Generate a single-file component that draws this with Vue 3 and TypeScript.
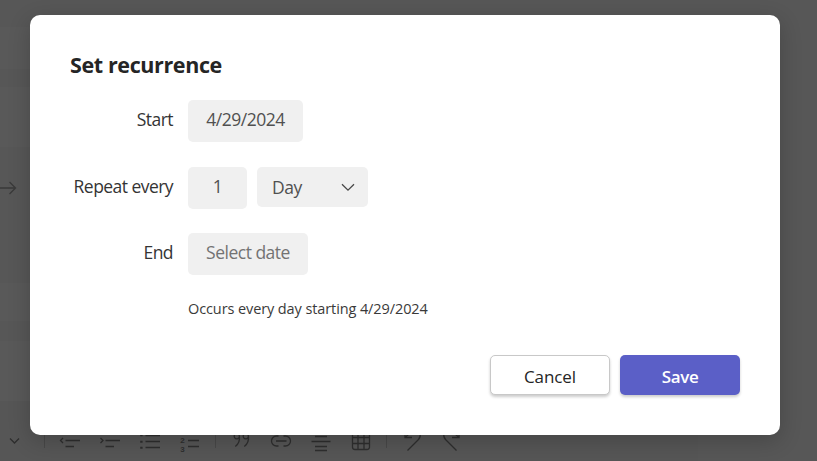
<script setup lang="ts">
import { computed, ref } from 'vue'

const startDate = ref('4/29/2024')
const interval = ref(1)
const unit = ref('Day')
const summary = computed(() => `Occurs every ${unit.value.toLowerCase()} starting ${startDate.value}`)

interface Tool { name: string; d?: string; kind: 'icon' | 'numbers' | 'sep' }
const tools: Tool[] = [
  { name: 'outdent', kind: 'icon', d: 'M13 18l-2.5 2.5 2.5 2.5M15.5 20.5H30M15.5 26.5H24' },
  { name: 'indent', kind: 'icon', d: 'M10.5 18l2.5 2.5-2.5 2.5M15.5 20.5H30M15.5 26.5H24' },
  { name: 'bullets', kind: 'icon', d: 'M15.5 15.5H30M15.5 21.5H30M15.5 27.5H30M10.2 15.5h2.4M10.2 21.5h2.4M10.2 27.5h2.4M10.2 14.8h2.4M10.2 22.2h2.4M10.2 28.2h2.4' },
  { name: 'numbers', kind: 'numbers', d: 'M18 20.5H29M18 26.5H29' },
  { name: 'divider-1', kind: 'sep' },
  { name: 'quote', kind: 'icon', d: 'M18.3 15.5a2.6 2.6 0 1 1-5 0 2.6 2.6 0 0 1 5 0c.6 4-.6 8.5-4 11M27.3 15.5a2.6 2.6 0 1 1-5 0 2.6 2.6 0 0 1 5 0c.6 4-.6 8.5-4 11' },
  { name: 'link', kind: 'icon', d: 'M17.5 16h-2a5 5 0 0 0 0 10h2M22.5 16h2a5 5 0 0 1 0 10h-2M15 21h10.5' },
  { name: 'align', kind: 'icon', d: 'M14 16.5h12M10.5 21.5h19M14 26.5h12M14 30.5h12' },
  { name: 'table', kind: 'icon', d: 'M11.5 12h17v15a2.5 2.5 0 0 1-2.5 2.5H14a2.5 2.5 0 0 1-2.5-2.5zM17 12v17.5M23 12v17.5M11.5 17.5h17M11.5 23.5h17' },
  { name: 'divider-2', kind: 'sep' },
  { name: 'undo', kind: 'icon', d: 'M13 10v7.5h7M13 17.5l5-4.5M22 10c6 0 8 5.5 4.5 9.5L15.5 30.5' },
  { name: 'redo', kind: 'icon', d: 'M27 10v7.5h-7M27 17.5l-5-4.5M18 10c-6 0-8 5.5-4.5 9.5L24.5 30.5' },
]
</script>

<template>
  <div class="page">
    <main class="backdrop">
      <div class="band band-a"></div>
      <div class="band band-b"></div>
      <div class="arrow-row">
        <svg class="arrow" width="17" height="16" viewBox="0 0 17 16"><path d="M0 8H15M9.5 2l6 6-6 6" /></svg>
      </div>
      <div class="band band-c"></div>
      <div class="band band-d"></div>
      <div class="toolbar">
        <svg width="28" height="42" viewBox="0 0 28 42"><path d="M10 18.5l4.5 4.5 4.5-4.5" /></svg>
        <span class="sep lead"></span>
        <template v-for="t in tools" :key="t.name">
          <span v-if="t.kind === 'sep'" class="sep"></span>
          <svg v-else width="40" height="42" viewBox="0 0 40 42">
            <path :d="t.d" />
            <template v-if="t.kind === 'numbers'">
              <text x="10.3" y="22.5">2</text>
              <text x="10.3" y="31.8">3</text>
            </template>
          </svg>
        </template>
      </div>
    </main>

    <div class="overlay">
      <section class="dialog" role="dialog" aria-labelledby="title">
        <h1 id="title">Set recurrence</h1>
        <div class="form">
          <span class="label">Start</span>
          <div class="field date">{{ startDate }}</div>
          <span class="label l-repeat">Repeat every</span>
          <div class="pair">
            <div class="field count">{{ interval }}</div>
            <div class="field select">
              <span>{{ unit }}</span>
              <svg width="14" height="9" viewBox="0 0 14 9"><path d="M1 1.2l6 6 6-6" /></svg>
            </div>
          </div>
          <span class="label">End</span>
          <div class="field end">Select date</div>
        </div>
        <p class="summary">{{ summary }}</p>
        <footer>
          <button class="cancel">Cancel</button>
          <button class="save">Save</button>
        </footer>
      </section>
    </div>
  </div>
</template>

<style>
body { overflow: hidden; }
</style>

<style scoped>
* { box-sizing: border-box; }
.page {
  position: relative;
  width: 817px;
  height: 461px;
  overflow: hidden;
  font-family: "Segoe UI", "Open Sans", "Noto Sans", sans-serif;
  color: #252525;
}
.backdrop {
  height: 461px;
  padding-top: 27px;
  display: flex;
  flex-direction: column;
  background: #575757;
}
.band { width: 700px; flex: none; background: #595959; }
.band-a { height: 42px; margin-bottom: 18px; }
.band-b { height: 60px; }
.arrow-row { flex: none; height: 109px; padding-top: 33px; }
.band-c { height: 38px; margin: 27px 0 20px; }
.band-d { height: 60px; }
.toolbar {
  flex: none;
  display: flex;
  align-items: flex-start;
  width: 698px;
  height: 60px;
  padding-top: 19px;
  background: #565656;
}
.backdrop svg { display: block; flex: none; fill: none; stroke: #2e2e2e; stroke-width: 1.3; }
.backdrop .arrow { stroke: #3a3a3a; }
.backdrop text { fill: #2e2e2e; stroke: none; font-family: "Liberation Sans", sans-serif; font-size: 8px; font-weight: 700; }
.sep { flex: none; width: 1px; height: 28px; margin: 0 5px; background: #484848; }
.sep.lead { margin-left: 16px; }
.overlay { position: absolute; inset: 0; padding: 15px 37px 26px 30px; }
.dialog {
  width: 750px;
  height: 420px;
  padding: 35px 40px 40px;
  display: flex;
  flex-direction: column;
  border-radius: 10px;
  background: #fff;
  box-shadow: 0 6px 22px rgba(0, 0, 0, .2);
}
h1 { margin: 0; height: 30px; line-height: 30px; font-size: 21.5px; font-weight: 700; letter-spacing: -.38px; white-space: nowrap; }
.form {
  display: grid;
  grid-template-columns: 103px max-content;
  grid-template-rows: 42px 42px 42px;
  row-gap: 24.5px;
  column-gap: 15px;
  margin-top: 20px;
}
.label { justify-self: end; line-height: 39px; font-size: 17.5px; letter-spacing: -.55px; color: #343434; white-space: nowrap; }
.field {
  height: 42px;
  display: flex;
  align-items: center;
  justify-content: center;
  padding-bottom: 4px;
  border-radius: 5px;
  background: #f0f0f0;
  color: #505050;
  font-size: 17.5px;
  letter-spacing: -.5px;
  white-space: nowrap;
}
.date { width: 115px; }
.pair { display: flex; gap: 10px; }
.count { width: 59px; }
.select { width: 111px; height: 40px; padding: 1px 13px 0 15px; justify-content: space-between; }
.select svg { fill: none; stroke: #484848; stroke-width: 1.3; }
.end { width: 120px; color: #737373; }
.summary { margin: 23px 0 0 118px; height: 22px; line-height: 22px; font-size: 14.5px; letter-spacing: -.1px; color: #3a3a3a; white-space: nowrap; }
footer { display: flex; justify-content: flex-end; gap: 10px; margin-top: auto; }
button {
  width: 120px;
  height: 40px;
  padding: 3px 0 0;
  border: 0;
  border-radius: 5px;
  font-family: inherit;
  font-size: 17px;
  font-weight: 500;
  letter-spacing: -.1px;
  box-shadow: 0 2px 3px rgba(0, 0, 0, .2);
}
.cancel { padding-top: 2px; border: 1px solid #c8c8c8; background: #fff; color: #252525; }
.save { background: #5b5fc7; color: #fff; font-weight: 650; letter-spacing: -.35px; }
</style>
